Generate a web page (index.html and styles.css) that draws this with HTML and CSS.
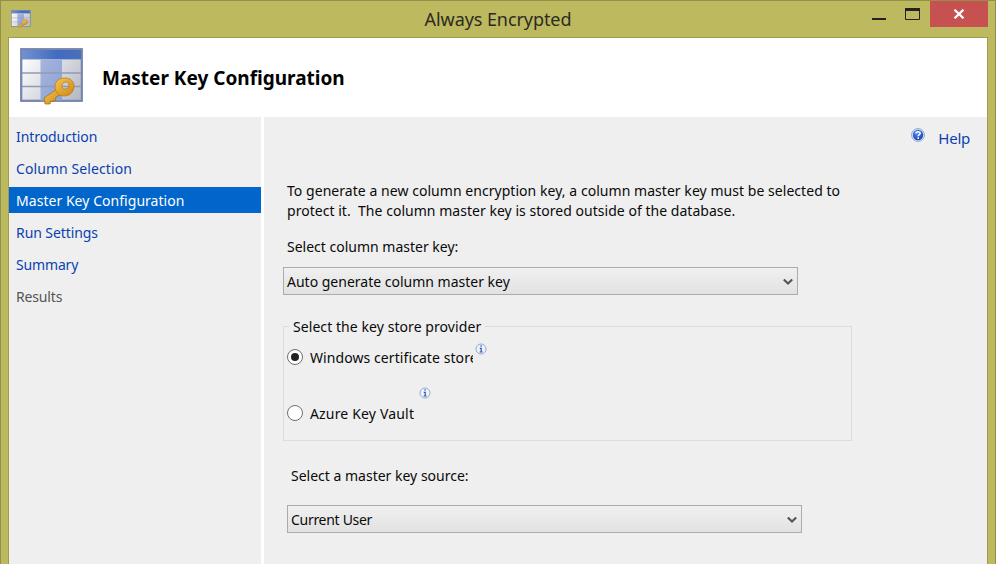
FILE: index.html
```
<!DOCTYPE html>
<html lang="en">
<head>
<meta charset="utf-8">
<title>Always Encrypted</title>
<link rel="stylesheet" href="styles.css">
</head>
<body>
<svg width="0" height="0" class="defs" aria-hidden="true">
  <defs>
    <linearGradient id="bar" x1="0" x2="1" y1="0" y2="0"><stop offset="0" stop-color="#7391cf"/><stop offset=".6" stop-color="#416bc0"/><stop offset="1" stop-color="#4a70bb"/></linearGradient>
    <linearGradient id="cells" gradientUnits="userSpaceOnUse" x1="2" x2="60" y1="10" y2="52"><stop offset="0" stop-color="#ffffff"/><stop offset="1" stop-color="#b4b8c2"/></linearGradient>
    <linearGradient id="mid" x1="0" x2="1" y1="0" y2="1"><stop offset="0" stop-color="#a6b4dc"/><stop offset="1" stop-color="#8da2d8"/></linearGradient>
    <linearGradient id="gold" x1="0" x2="1" y1="0" y2="1"><stop offset="0" stop-color="#f7c64c"/><stop offset="1" stop-color="#cf8614"/></linearGradient>
    <radialGradient id="ball" cx=".4" cy=".3" r=".8"><stop offset="0" stop-color="#5c8df0"/><stop offset="1" stop-color="#0d3aa5"/></radialGradient>
    <symbol id="table-key" viewBox="0 0 64 58">
      <rect x="1" y="1" width="61" height="52" fill="#9aa6c4" stroke="#7382ab" stroke-width="1.8"/>
      <rect x="2" y="2" width="59" height="9.5" fill="url(#bar)"/>
      <rect x="2.5" y="11.5" width="58" height="40" fill="url(#cells)"/>
      <rect x="20.5" y="11.5" width="21.5" height="41" fill="url(#mid)"/>
      <path d="M2 25h59M2 38.5h59" stroke="#8f9ab5" stroke-width="1.3"/>
      <path d="M37 41 24 50 25 56 30 56 31 53 35 53 36 49 42 46Z" fill="url(#gold)" stroke="#9c681b" stroke-width=".7"/>
      <path fill-rule="evenodd" d="M35 39c0-6 4-9 10-9 5 0 9 3 9 8 0 6-4 10-10 10-5 0-9-4-9-9Zm7-1c0 2 1 3 3 3 3 0 4-2 4-4s-1-3-3-3c-3 0-4 2-4 4Z" fill="url(#gold)" stroke="#b0761d" stroke-width=".7"/>
    </symbol>
    <symbol id="info" viewBox="0 0 12 12">
      <circle cx="6" cy="6" r="5" fill="#eef3fb" stroke="#98abc9"/>
      <path d="M4.8 5.3H6.2M6.2 4.8V9M4.6 9h3M6.1 2.3v1.5" stroke="#2f57b5" stroke-width="1.2" fill="none"/>
    </symbol>
    <symbol id="chevron" viewBox="0 0 10 8"><path d="M.8 1.4 5 5.6 9.2 1.4" fill="none" stroke="#555" stroke-width="2.1"/></symbol>
  </defs>
</svg>
<div class="window">
  <header class="titlebar">
    <svg class="app-icon"><use href="#table-key"/></svg>
    <span class="caption">Always Encrypted</span>
    <div class="controls">
      <svg class="min" viewBox="0 0 14 2"><path d="M0 1h14" stroke="#222" stroke-width="2"/></svg>
      <svg class="max" viewBox="0 0 15 12"><path d="M.5 1v10.5h14V1" fill="none" stroke="#222"/><path d="M0 1.5h15" stroke="#222" stroke-width="3"/></svg>
      <div class="close"><svg viewBox="0 0 12 10"><path d="M1.5.7 10.5 9.3M10.5.7 1.5 9.3" stroke="#fff" stroke-width="2.2"/></svg></div>
    </div>
  </header>
  <div class="client">
    <div class="banner">
      <svg class="page-icon"><use href="#table-key"/></svg>
      <h1>Master Key Configuration</h1>
    </div>
    <div class="body">
      <nav>
        <a class="n1">Introduction</a>
        <a class="n2">Column Selection</a>
        <a class="n3 active">Master Key Configuration</a>
        <a class="n4">Run Settings</a>
        <a class="n5">Summary</a>
        <a class="n6 disabled">Results</a>
      </nav>
      <main>
        <div class="help">
          <svg viewBox="0 0 14 14"><circle cx="7" cy="7" r="6.4" fill="#e4ecfa" stroke="#7d9bd8" stroke-width=".9"/><circle cx="7" cy="7" r="5.2" fill="url(#ball)"/><path d="M5 5.4C5 3.3 9.2 3.2 9.2 5.3 9.2 6.7 7.2 6.6 7.2 8.3M7.2 9.3v1.6" fill="none" stroke="#fff" stroke-width="1.5"/></svg>
          <span>Help</span>
        </div>
        <p class="intro"><span class="l1">To generate a new column encryption key, a column master key must be selected to</span><br><span class="l2">protect it.&nbsp; The column master key is stored outside of the database.</span></p>
        <div class="label"><span class="l3">Select column master key:</span></div>
        <div class="select"><span class="l4">Auto generate column master key</span><svg><use href="#chevron"/></svg></div>
        <fieldset>
          <legend><span class="l5">Select the key store provider</span></legend>
          <div class="option first"><i class="radio on"></i><span class="l6">Windows certificate store</span><svg><use href="#info"/></svg></div>
          <div class="option second"><i class="radio"></i><span class="l7">Azure Key Vault</span><svg><use href="#info"/></svg></div>
        </fieldset>
        <div class="label source"><span class="l8">Select a master key source:</span></div>
        <div class="select user"><span class="l9">Current User</span><svg><use href="#chevron"/></svg></div>
      </main>
    </div>
  </div>
</div>
</body>
</html>
```

FILE: styles.css
```
* { box-sizing: border-box; }
body { margin: 0; overflow: hidden; font: 14px/20px "Noto Sans", sans-serif; color: #0a0a0a; }
.defs { position: absolute; }
svg { display: block; flex: none; }
span { white-space: pre; }
.window { width: 996px; height: 564px; background: #bdb95f; border: 1px solid #948e4d; border-bottom: 0; padding: 0 7px; display: flex; flex-direction: column; }
.titlebar { height: 36px; flex: none; display: grid; grid-template-columns: 130px 1fr 130px; }
.app-icon { width: 20px; height: 20px; margin: 8px 0 0 3px; }
.caption { justify-self: center; font-size: 18px; line-height: 36px; letter-spacing: -.08px; color: #2c2b22; }
.controls { display: flex; justify-content: flex-end; align-items: flex-start; }
.min { width: 14px; height: 2px; margin: 17px 19px 0 0; }
.max { width: 15px; height: 12px; margin: 7px 10px 0 0; }
.close { width: 58px; height: 26px; background: #c75050; display: grid; place-items: center; }
.close svg { width: 12px; height: 10px; }
.client { flex: 1; border: 1px solid #a09b50; border-bottom: 0; background: #fff; display: flex; flex-direction: column; }
.banner { height: 79px; flex: none; display: flex; padding: 10px 0 0 11px; }
.page-icon { width: 64px; height: 58px; }
h1 { font: bold 19px/26px "Noto Sans", sans-serif; color: #000; margin: 17px 0 0 18px; white-space: pre; }
.body { flex: 1; display: grid; grid-template-columns: 252px 1fr; gap: 3px; }
nav { background: #efefef; padding-top: 6px; display: flex; flex-direction: column; gap: 6px; }
nav a { height: 26px; line-height: 27px; padding-left: 7px; color: #0b3fae; white-space: pre; }
nav .active { background: #0066cc; color: #fff; }
nav .disabled { color: #555; }
.n1, .n4 { letter-spacing: -.08px; }
.n2 { letter-spacing: .09px; }
.n3 { letter-spacing: .04px; }
.n5, .n6 { letter-spacing: -.16px; }
main { background: #efefef; padding-left: 19px; }
.help { height: 57px; display: flex; justify-content: flex-end; padding: 11px 17px 0 0; color: #0b3fae; }
.help svg { width: 14px; height: 14px; margin-right: 13px; }
.help span { line-height: 20px; font-size: 15px; letter-spacing: -.25px; }
.intro { margin: 7px 0 0 4px; }
.l1 { letter-spacing: .045px; }
.l2 { letter-spacing: .03px; }
.l5 { letter-spacing: .07px; }
.l7 { letter-spacing: .17px; }
.l9 { letter-spacing: -.3px; }
.label { margin: 16px 0 0 4px; height: 20px; }
.select { width: 515px; height: 28px; margin-top: 10px; border: 1px solid #acacac; background: linear-gradient(#f0f0f0, #e2e2e2); display: flex; align-items: center; justify-content: space-between; padding: 0 4px 0 3px; }
.select span { padding-top: 2px; }
.select svg { width: 10px; height: 8px; margin-top: 2px; }
fieldset { position: relative; width: 569px; height: 125px; margin: 21px 0 0; padding: 0; border: 1px solid #dcdcdc; }
legend { margin-left: 5px; padding: 1px 4px 0; height: 20px; }
.option { display: flex; align-items: center; padding-left: 3px; height: 20px; position: relative; }
.option span { padding-top: 1px; }
.first { margin-top: 11px; }
.second { margin-top: 36px; }
.radio { width: 16px; height: 16px; border: 1px solid #707070; border-radius: 50%; background: #fff; margin-right: 7px; flex: none; display: grid; place-items: center; }
.on::after { content: ""; width: 8px; height: 8px; border-radius: 50%; background: #222; }
.option svg { position: absolute; width: 12px; height: 12px; }
.first svg { left: 191px; top: -4px; }
.second svg { left: 135px; top: -16px; }
.l6 { width: 163px; overflow: hidden; letter-spacing: .08px; }
.source { margin: 25px 0 0 8px; }
.user { margin: 19px 0 0 4px; }
```
